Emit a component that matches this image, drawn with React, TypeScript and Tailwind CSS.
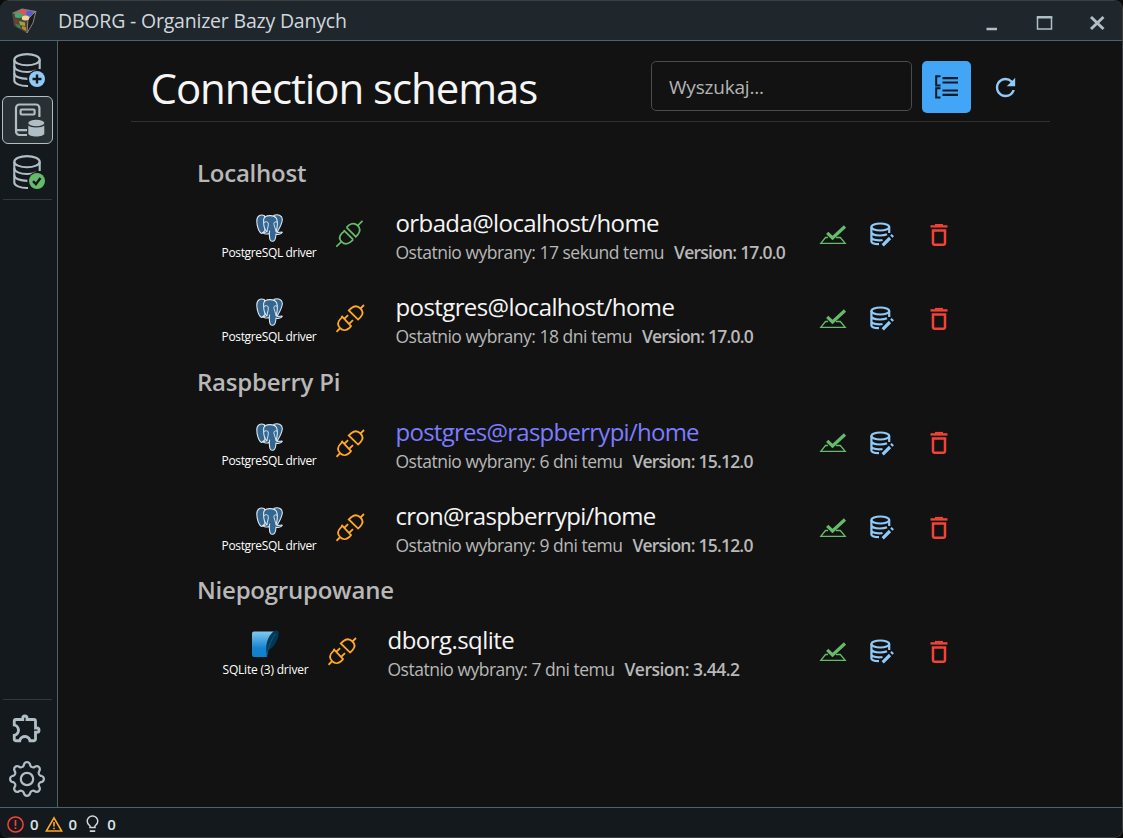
import React from "react";
import { MdOutlineExtension, MdRefresh } from "react-icons/md";
import { BsGear } from "react-icons/bs";

type Connection = {
  name: string;
  last: string;
  version: string;
  driver: "pg" | "sqlite";
  connected?: boolean;
  accent?: boolean;
};

const groups: { title: string; tracking: string; items: Connection[] }[] = [
  {
    title: "Localhost",
    tracking: "tracking-[-0.600px]",
    items: [
      { name: "orbada@localhost/home", last: "17 sekund temu", version: "17.0.0", driver: "pg", connected: true },
      { name: "postgres@localhost/home", last: "18 dni temu", version: "17.0.0", driver: "pg" },
    ],
  },
  {
    title: "Raspberry Pi",
    tracking: "tracking-[-0.740px]",
    items: [
      { name: "postgres@raspberrypi/home", last: "6 dni temu", version: "15.12.0", driver: "pg", accent: true },
      { name: "cron@raspberrypi/home", last: "9 dni temu", version: "15.12.0", driver: "pg" },
    ],
  },
  {
    title: "Niepogrupowane",
    tracking: "tracking-[-0.550px]",
    items: [{ name: "dborg.sqlite", last: "7 dni temu", version: "3.44.2", driver: "sqlite" }],
  },
];

function AppLogo() {
  return (
    <svg width="26" height="26" viewBox="0 0 26 26">
      <path d="M1 5 11 .500 25 3 23 12 16 25 3 18Z" fill="#4a4542" />
      <path d="M1 5 11 .500 25 3 17 11Z" fill="#857a74" />
      <path d="M17 11 25 3 22 15 16 25Z" fill="#1c1c1c" stroke="#a09c97" strokeWidth=".8" />
      <ellipse cx="11.500" cy="4" rx="3.600" ry="2.400" fill="#d8575c" />
      <ellipse cx="18.500" cy="5.500" rx="3.400" ry="2.400" fill="#5a5ad8" />
      <ellipse cx="7.500" cy="7.500" rx="3.800" ry="2.500" fill="#3fae62" />
      <ellipse cx="14.500" cy="10" rx="3.800" ry="2.500" fill="#f0d79c" />
      <path d="M3 10 7 12 7 16 4 15Z" fill="#7a3a35" />
      <path d="M8 13 14 14.500 14 18 9 17Z" fill="#a8a02f" />
      <path d="M4 15.500 9 17 10 21 6 19Z" fill="#2f8a3c" />
      <path d="M11 18 15 19 15 23 11 21Z" fill="#b58a2a" />
    </svg>
  );
}

function DatabaseIcon({ children }: { children: React.ReactNode }) {
  return (
    <svg width="34" height="36" viewBox="0 0 34 36" fill="none">
      <g stroke="#b0bec5" strokeWidth="2.1">
        <ellipse cx="15" cy="7.7" rx="12.7" ry="5.6" />
        <path d="M2.3 7.7V28.6C2.3 31.5 8 34 15 34H16" />
        <path d="M27.7 7.7V17" />
        <path d="M2.3 14.3C2.3 17.6 8 20 15 20 18.500 20 21.500 19.500 24 18.400" />
        <path d="M2.3 21.300C2.3 24.600 8 26.900 15.500 26.900" />
      </g>
      {children}
    </svg>
  );
}

function DatabaseAdd() {
  return (
    <DatabaseIcon>
      <circle cx="25" cy="27" r="9.300" fill="#14191d" />
      <circle cx="25" cy="27" r="8" fill="#90caf9" />
      <path d="M25 22.500v9M20.500 27h9" stroke="#14191d" strokeWidth="2.400" />
    </DatabaseIcon>
  );
}

function DatabaseCheck() {
  return (
    <DatabaseIcon>
      <circle cx="25" cy="27" r="9.300" fill="#14191d" />
      <circle cx="25" cy="27" r="8" fill="#66bb6a" />
      <path d="m21 27.200 2.900 3 4.600-6.200" stroke="#14191d" strokeWidth="2.400" />
    </DatabaseIcon>
  );
}

function SchemaBook() {
  return (
    <svg width="32" height="34" viewBox="0 0 32 34" fill="none" stroke="#b0bec5" strokeWidth="2.200">
      <path d="M26.400 14V5a3.500 3.500 0 0 0-3.500-3.500H6.500A3.500 3.500 0 0 0 3 5V28.500A3.500 3.500 0 0 0 6.500 32H14" />
      <path d="M3.500 27.200H14" />
      <rect x="7.600" y="6.500" width="14" height="5" rx="1" />
      <g fill="#b0bec5" stroke="none">
        <ellipse cx="23.300" cy="20" rx="8" ry="3.300" />
        <path d="M15.300 22.500c2 2.600 14 2.600 16 0V30.500c0 4-16 4-16 0Z" />
      </g>
    </svg>
  );
}

function TreeIcon() {
  return (
    <svg width="24" height="24" viewBox="0 0 24 24" fill="none" stroke="#0b1a28" strokeWidth="2">
      <path d="M5.500 1.200H1.200V10.500H5.500M5.500 13.200H1.200V22.500H5.500" />
      <path d="M7.500 3.200H23M7.500 7.500H23M7.500 15.500H23M7.500 19.800H23" strokeWidth="2.200" />
    </svg>
  );
}

function Elephant() {
  return (
    <svg width="27" height="28" viewBox="0 0 27 28" strokeLinejoin="round" strokeLinecap="round">
      <g fill="#336791" stroke="#dfe6ec" strokeWidth="1.100">
        <path d="M8.500 1.800C4.500-.200.800 2 .800 7 .800 11 2.500 18 5.200 19.300 6.700 20 8 17.500 9 16.500Z" />
        <path d="M18 1.300C22.500-.200 26.600 2 26.300 6 26 10 23 15 21.500 17.500L17.500 16Z" />
        <path d="M7.700 5C9 .800 18 .300 20.500 4.500 21.800 7.500 21.600 14 20 17.500 20.800 19.300 25 17.800 26.300 18.200 25 20.500 20.800 21 20 20 19.600 23 20 27.300 16.500 27.300 13.500 27.500 13.500 24 13.300 19.500 11 20.500 8 20 6.800 18.600 8 18.300 10 18.500 10.600 17.500 7.500 14.500 7.500 8 7.700 5Z" />
      </g>
      <path d="M8 8.500C9.500 7.200 11.800 7.500 12.200 9 12.700 11.500 11.500 14 11 17.500M20.800 8C18.700 7.300 17.500 8.500 18 10.500 18.700 13 19 14 20 17M13.300 19.500 13.600 17" fill="none" stroke="#dfe6ec" strokeWidth="1" />
    </svg>
  );
}

function Feather() {
  return (
    <svg width="29" height="30" viewBox="0 0 29 30">
      <defs>
        <linearGradient id="paper" x1="0" y1="0" x2="0" y2="1">
          <stop offset="0" stopColor="#82c9ef" />
          <stop offset=".65" stopColor="#1583d0" />
          <stop offset="1" stopColor="#0f80cc" />
        </linearGradient>
      </defs>
      <path d="M3 1.500H23C18 8 16 17 16 27H3A2 2 0 0 1 1 25V3.500A2 2 0 0 1 3 1.500Z" fill="url(#paper)" />
      <path d="M25 .500C20 1.500 15 10 15.200 19L16 29.500 17 20C22 19 27.500 10 27.700 3 27.600 1 26.500.200 25 .500Z" fill="#003956" />
      <path d="M24.500 4C20 10 17 17 16.300 25" fill="none" stroke="#2f6a88" strokeWidth=".6" />
    </svg>
  );
}

function Plug({ connected }: { connected?: boolean }) {
  return connected ? (
    <svg width="30" height="30" viewBox="0 0 30 30" fill="none" stroke="#66bb6a" strokeWidth="1.700">
      <path d="M.300 27.700 5.700 22.300M21.200 7.200 26.500 1.900M7.700 11.200 17.200 20.700M10.500 8.400 20 17.900" />
      <path d="M8.600 12.100 6 14.200C3 17.200 3 20.200 5.700 22.900 8.500 25.700 12 25.200 15 22.700L17.200 20.700M10.500 8.400 13 6.200C16 3.900 19 4 21.800 6.700 24.500 9.500 24.200 12.700 21.800 15.700L19.200 18.300" />
    </svg>
  ) : (
    <svg width="30" height="30" viewBox="0 0 30 30" fill="none" stroke="#ffa726" strokeWidth="1.800">
      <g transform="translate(-0.500 1)">
        <path d="M1 27.800 4.800 24M25 4.500 28.500 1M6 11.800 16 22.600M8.600 15 12.600 11.200M13.500 20 17.500 16.200" />
        <path d="M7 12.800 4.500 15.500C1.800 18.500 2 21.500 4.600 24.200 7.400 27 11 26.500 13.500 24.300L15.600 22.200" />
        <path d="M13.300 6.500 16 4C19 1.600 22.300 1.800 25 4.500 27.700 7.200 27.400 10.500 25 13.200L22.600 15.600Z" />
      </g>
    </svg>
  );
}

function TestIcon() {
  return (
    <svg width="28" height="20" viewBox="0 0 28 20" fill="none" stroke="#66bb6a" className="shrink-0">
      <path d="M9 12.500H6.500L1.800 18.300H26.200L21.300 12.500H17" strokeWidth="1.300" />
      <path d="M8.200 7.800 13.500 13 26 1.500" strokeWidth="3.200" />
    </svg>
  );
}

function EditDatabase() {
  return (
    <svg width="25" height="25" viewBox="0 0 25 25" fill="none" stroke="#90caf9" strokeWidth="2.200" className="shrink-0">
      <ellipse cx="10.300" cy="5" rx="8.900" ry="3.500" />
      <path d="M1.400 5V19.500C1.400 21.300 4.500 22 9 22.200M19.200 5V11M1.400 10C1.400 12 5 13.500 10 13.500 13 13.500 15.500 13 17 12.300M1.400 15C1.400 17 4.500 18.200 9 18.300 10.500 18.300 11.500 18.300 12.500 18" />
      <path d="M12.700 23.300 20 16M21.300 14.700 22.800 13.200" strokeWidth="3.200" />
    </svg>
  );
}

function TrashIcon() {
  return (
    <svg width="18" height="24" viewBox="0 0 18 24" fill="none" stroke="#f44336" className="shrink-0">
      <path d="M.500 3.400H17.500" strokeWidth="2.400" />
      <path d="M5 1.800H13" strokeWidth="1.800" />
      <path d="M3 7.400H15V20.200A1.600 1.600 0 0 1 13.400 21.800H4.600A1.600 1.600 0 0 1 3 20.200Z" strokeWidth="2.500" />
    </svg>
  );
}

function Row({ item, tracking }: { item: Connection; tracking: string }) {
  const pg = item.driver === "pg";
  return (
    <div className="flex h-[84.300px] items-center">
      <div className={pg ? "flex w-[96px] flex-col items-center pt-1" : "flex w-[88px] flex-col items-center pt-1"}>
        <div className="mr-[2px] mt-[2px] flex h-[29px] items-center">{pg ? <Elephant /> : <Feather />}</div>
        <div className={pg ? "mr-[2px] h-5 whitespace-nowrap text-[12px] leading-5 tracking-[-0.350px] text-white" : "mr-px h-5 whitespace-nowrap text-[12px] leading-5 tracking-[-0.200px] text-white"}>
          {pg ? "PostgreSQL driver" : "SQLite (3) driver"}
        </div>
      </div>
      <div className="mb-[2px] ml-[18px] w-[30px]"><Plug connected={item.connected} /></div>
      <div className="ml-[29.500px] flex-1 whitespace-nowrap pt-[3px]">
        <div className={`${item.accent ? "text-[#7c7cff]" : "text-[#f5f5f5]"} ${tracking} text-[24px] leading-[31px]`}>{item.name}</div>
        <div className="flex gap-[10px] text-[17.500px] leading-7 tracking-[-0.500px] text-[#b8b8b8]">
          <span>Ostatnio wybrany: {item.last}</span>
          <span className={pg ? "font-semibold tracking-[-0.780px]" : "font-semibold tracking-[-0.500px]"}>Version: {item.version}</span>
        </div>
      </div>
      <div className="flex w-[153px] shrink-0 items-center pb-px">
        <TestIcon />
        <div className="ml-[22.500px]"><EditDatabase /></div>
        <div className="ml-[35.500px]"><TrashIcon /></div>
      </div>
    </div>
  );
}

export default function App() {
  return (
    <div className="h-[838px] w-[1123px] overflow-hidden bg-[#0c0c0c] font-['Open_Sans','Noto_Sans',sans-serif] [font-stretch:92%]">
      <div className="flex h-full flex-col overflow-hidden rounded-[9px] border border-[#3b3f42] border-l-0 bg-[#121212]">
        <header className="flex h-10 shrink-0 items-center border-b border-[#4b636e] bg-[#1f262c] pl-[11px] text-[#cfd8dc]">
          <AppLogo />
          <h1 className="ml-[21px] flex-1 text-[19.500px] tracking-[-0.200px]">DBORG - Organizer Bazy Danych</h1>
          <svg width="120" height="16" viewBox="0 0 120 16" fill="none" stroke="#b0bec5" className="mr-[16px] mt-[4px]">
            <path d="M.500 14H11" strokeWidth="2.600" />
            <path d="M51.500 2V14H65.500V2" strokeWidth="1.500" />
            <path d="M50.800 2.200H66.300" strokeWidth="2.600" />
            <path d="M105 2 117.500 14M117.500 2 105 14" strokeWidth="2.900" />
          </svg>
        </header>
        <div className="flex min-h-0 flex-1">
          <nav className="flex w-[58px] shrink-0 flex-col border-r border-[#4b636e] bg-[#14191d] pl-[2px] pt-[5px]">
            <div className="flex h-[49px] w-[51px] items-center justify-center pb-[2px] pl-[3px]"><DatabaseAdd /></div>
            <div className="mt-[1px] flex h-[48px] w-[51px] items-center justify-center rounded-md border border-[#b0bec5] bg-[#293033] pl-[3px]"><SchemaBook /></div>
            <div className="mt-[3px] flex h-[50px] w-[51px] items-center justify-center pl-[3px]"><DatabaseCheck /></div>
            <div className="ml-px mt-[2px] h-px w-[49px] bg-[#33383b]" />
            <div className="flex-1" />
            <div className="ml-px h-px w-[49px] bg-[#33383b]" />
            <div className="flex h-[56px] w-[50px] items-center justify-center"><MdOutlineExtension size={34} className="text-[#b0bec5]" /></div>
            <div className="flex h-[51px] w-[50px] items-start justify-center pt-[5px]"><BsGear size={36} className="text-[#b0bec5]" /></div>
          </nav>
          <main className="flex-1 pl-[73px] pr-[72px]">
            <div className="flex h-[81px] w-[919px] items-start border-b border-[#313131] pl-[19.500px] pt-[20px]">
              <h2 className="w-[500.500px] whitespace-nowrap text-[42px] leading-[54px] tracking-[-1.080px] text-[#f5f5f5]">Connection schemas</h2>
              <input className="h-[50px] w-[261px] rounded-[5px] border border-[#4b4b4b] bg-transparent px-[17px] pt-[2px] text-[19px] tracking-[-0.200px] placeholder:text-[#b5b5b5]" placeholder="Wyszukaj..." />
              <button className="ml-[10px] flex h-[52px] w-[49px] items-center justify-center rounded-[5px] bg-[#42a5f5]"><TreeIcon /></button>
              <button className="ml-[20px] flex h-[52px] items-center text-[#90caf9]"><MdRefresh size={29} /></button>
            </div>
            <div className="pl-[66px] pr-[78px] pt-[31px]">
              {groups.map((group) => (
                <section key={group.title}>
                  <h3 className="h-10 text-[24px] font-semibold leading-10 tracking-[-0.230px] text-[#b8b8b8]">{group.title}</h3>
                  <div className="pl-[25px]">
                    {group.items.map((item) => <Row key={item.name} item={item} tracking={group.tracking} />)}
                  </div>
                </section>
              ))}
            </div>
          </main>
        </div>
        <footer className="flex h-[30px] shrink-0 items-center border-t border-[#4b636e] bg-[#14191d] pl-[7px] pt-[3px] text-[15px] font-semibold text-[#dbe3e7]">
          <svg width="17" height="17" viewBox="0 0 17 17" fill="none" stroke="#f44336" strokeWidth="1.500">
            <circle cx="8.500" cy="8.500" r="7.600" />
            <path d="M8.500 4V10M8.500 11.300V13" strokeWidth="1.700" />
          </svg>
          <span className="ml-[6px] mr-[6px]">0</span>
          <svg width="18" height="17" viewBox="0 0 18 17" fill="none" stroke="#ffa726" strokeWidth="1.600">
            <path d="M9 1.800 16.700 15H1.300Z" />
            <path d="M9 6V10.500M9 11.800V13.300" />
          </svg>
          <span className="ml-[6px] mr-[6px]">0</span>
          <svg width="18" height="18" viewBox="0 0 18 18" fill="none" stroke="#cfd8dc" strokeWidth="1.500">
            <path d="M7 12.500V11C5.200 9.800 4.200 8.200 4.200 6.300A5.300 5.300 0 0 1 14.800 6.300C14.800 8.200 13.800 9.800 12 11V12.500Z" />
            <path d="M6.800 16.200H12.200" strokeWidth="1.700" />
          </svg>
          <span className="ml-[6px]">0</span>
        </footer>
      </div>
    </div>
  );
}
